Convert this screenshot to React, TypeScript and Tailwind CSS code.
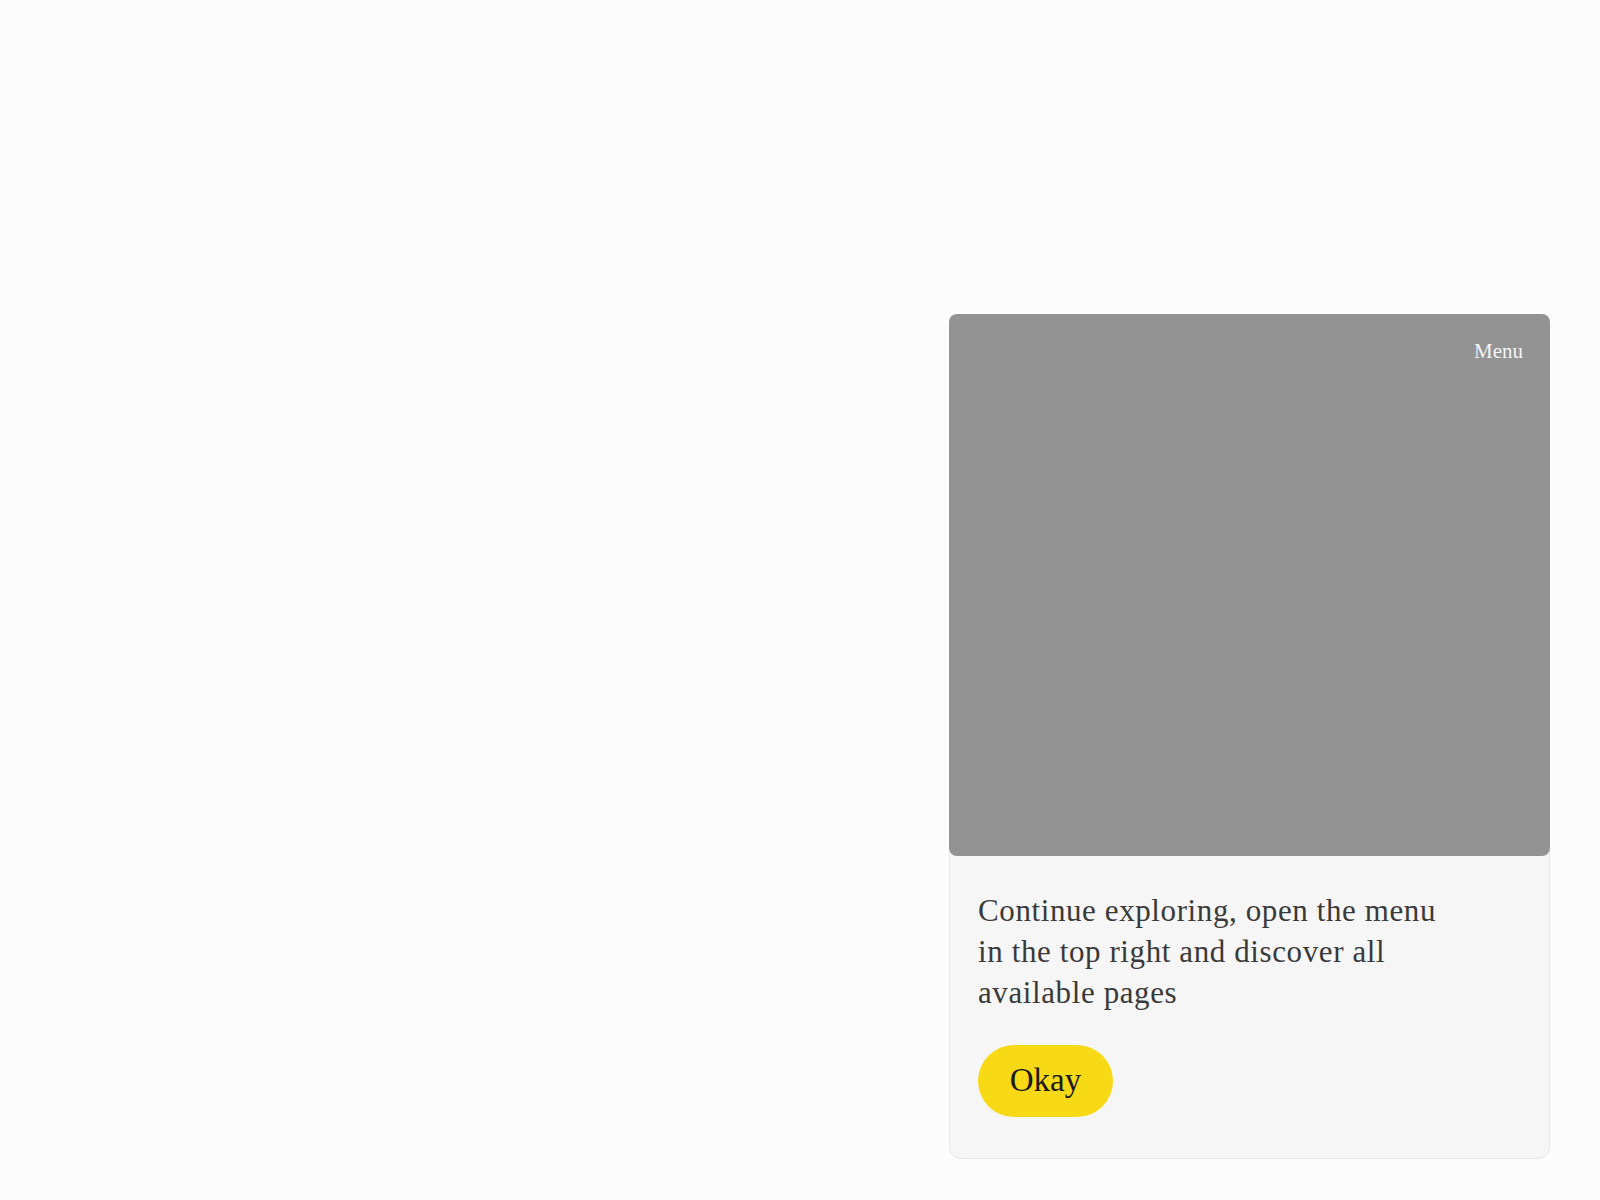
export default function App() {
  return (
    <div className="min-h-[1200px] w-full bg-[#fcfcfc] flex justify-end pt-[314px] pr-[50px] font-['Liberation_Serif',serif]">
      <div className="w-[601px] h-[845px] rounded-xl border border-[#e6e6e6] bg-[#f6f6f6] flex flex-col">
        {/* Preview image */}
        <div className="relative -mx-px -mt-px h-[542px] rounded-lg bg-[#939393]">
          <span className="absolute top-[22px] right-[27px] text-[21px] text-[#f4f4f4]">Menu</span>
        </div>
        <div className="px-7 pt-[34px]">
          <p className="max-w-[475px] text-[31px] leading-[41px] tracking-[0.6px] text-[#3a3a3a]">
            Continue exploring, open the menu in the top right and discover all available pages
          </p>
          <button className="mt-[32px] h-[72px] w-[135px] rounded-full bg-[#f8d915] text-[33px] text-[#1a1a1a]">
            Okay
          </button>
        </div>
      </div>
    </div>
  );
}
